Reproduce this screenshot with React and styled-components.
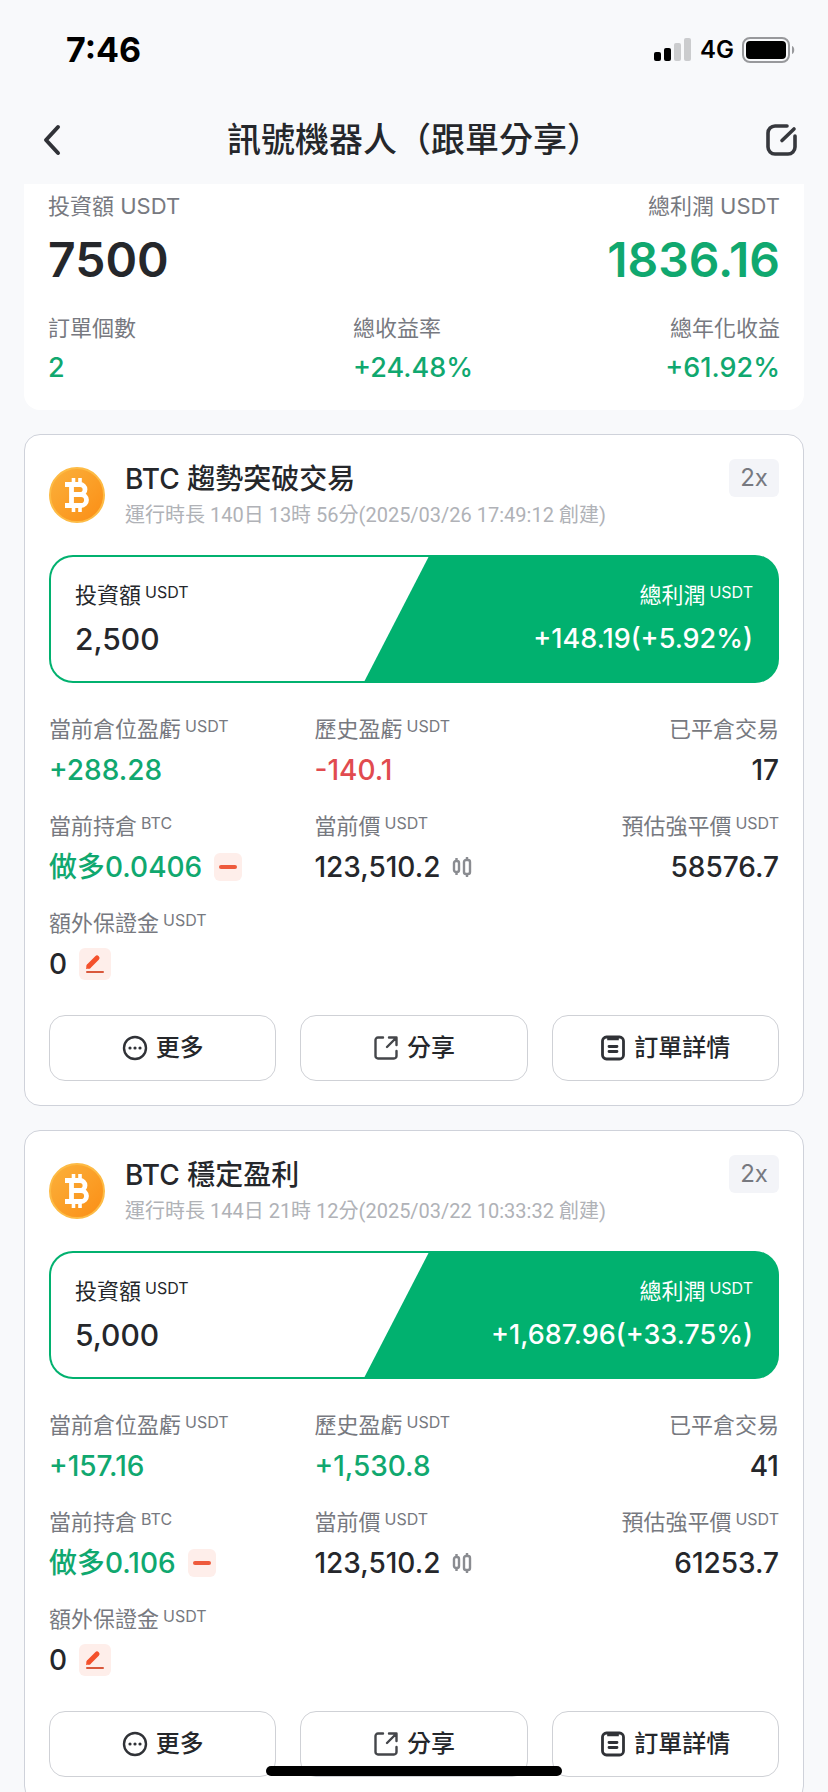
import React from "react";
import styled, { createGlobalStyle } from "styled-components";

const GREEN = "#01b16f";
const tones = { up: "#10a86f", down: "#e14b4f", dark: "#25272b" };

const GlobalStyle = createGlobalStyle`
  * { box-sizing: border-box; }
  html { scrollbar-width: none; }
  body {
    margin: 0;
    background: #f8f9fb;
    color: #25272b;
    font-family: Inter, "Noto Sans CJK TC", sans-serif;
    font-size: 22px;
  }
  button {
    margin: 0;
    padding: 0;
    border: 0;
    background: none;
    color: inherit;
    font: inherit;
    cursor: pointer;
  }
  h1, h2, p, dl, dd, dt { margin: 0; font-weight: 400; }
  svg { display: block; flex: none; }
`;

const StatusBar = styled.div`
  display: flex;
  align-items: center;
  justify-content: space-between;
  height: 100px;
  padding: 0 32px 0 66px;
  color: #000;
`;

const Clock = styled.time`
  font-size: 34px;
  line-height: 40px;
  font-weight: 700;
`;

const StatusIcons = styled.div`
  display: flex;
  align-items: center;
  gap: 8px;
  font-size: 24px;
  line-height: 28px;
  font-weight: 600;
`;

const NavBar = styled.header`
  display: grid;
  grid-template-columns: 28px 1fr 40px;
  align-items: center;
  height: 80px;
  padding: 0 26px 0 38px;
`;

const NavButton = styled.button`
  display: flex;
  align-items: center;
  justify-content: center;
  height: 40px;
`;

const PageTitle = styled.h1`
  text-align: center;
  font-size: 34px;
  line-height: 44px;
  font-weight: 500;
`;

const Content = styled.main`
  display: flex;
  flex-direction: column;
  gap: 24px;
  padding: 4px 24px 24px;
`;

const Summary = styled.section`
  padding: 8px 24px 24px;
  border-radius: 0 0 16px 16px;
  background: #fff;
`;

const SummaryTop = styled.dl`
  display: flex;
  justify-content: space-between;
  margin-bottom: 24px;
`;

const SummaryGrid = styled.dl`
  display: grid;
  grid-template-columns: 5fr 4fr 3fr;
`;

const Stat = styled.div`
  text-align: ${(p) => (p.$end ? "right" : "left")};
`;

const StatLabel = styled.dt`
  color: #777980;
  line-height: 28px;
  white-space: nowrap;
`;

const BigValue = styled.dd`
  margin-top: 10px;
  color: ${(p) => tones[p.$tone]};
  font-size: 48px;
  line-height: 60px;
  font-weight: 600;
`;

const MidValue = styled.dd`
  margin-top: 8px;
  color: ${(p) => tones[p.$tone]};
  font-size: 27px;
  line-height: 36px;
  font-weight: 500;
`;

const Card = styled.article`
  padding: 24px;
  border: 1px solid #cfd2da;
  border-radius: 16px;
  background: #fff;
`;

const CardHeader = styled.div`
  display: flex;
  align-items: center;
  gap: 20px;
  height: 72px;
`;

const Heading = styled.div`
  flex: 1;
`;

const BotName = styled.h2`
  font-size: 28px;
  line-height: 36px;
  font-weight: 500;
`;

const RunTime = styled.p`
  margin-top: 4px;
  color: #b0b2b7;
  font-family: Roboto, "Noto Sans CJK TC", sans-serif;
  font-size: 20px;
  line-height: 28px;
  white-space: nowrap;
`;

const Leverage = styled.span`
  align-self: flex-start;
  width: 50px;
  border-radius: 6px;
  background: #f3f4f8;
  color: #777980;
  font-size: 24px;
  line-height: 38px;
  text-align: center;
`;

const Banner = styled.dl`
  display: flex;
  height: 128px;
  margin-top: 24px;
  padding: 2px;
  border-radius: 24px;
  background: ${GREEN};
`;

const Invested = styled.div`
  width: 52%;
  padding: 24px;
  border-radius: 22px 0 0 22px;
  background: #fff;
  clip-path: polygon(0 0, 100% 0, calc(100% - 64px) 100%, 0 100%);
`;

const Profit = styled.div`
  flex: 1;
  padding: 24px;
  color: #fff;
  text-align: right;
`;

const BannerLabel = styled.dt`
  line-height: 28px;
`;

const BannerValue = styled.dd`
  margin-top: 12px;
  font-size: ${(p) => (p.$large ? 30 : 27)}px;
  line-height: 36px;
  font-weight: 500;
`;

const Unit = styled.span`
  display: inline-block;
  margin-left: 4px;
  font-size: 16px;
  line-height: 20px;
  vertical-align: 5px;
`;

const Metrics = styled.dl`
  display: grid;
  grid-template-columns: 4fr 4fr 3fr;
  row-gap: 24px;
  margin-top: 32px;
`;

const MetricValue = styled.dd`
  display: flex;
  align-items: center;
  justify-content: ${(p) => (p.$end ? "flex-end" : "flex-start")};
  gap: 12px;
  height: 36px;
  margin-top: 9px;
  color: ${(p) => tones[p.$tone]};
  font-size: 28px;
  line-height: 36px;
  font-weight: 500;
  white-space: nowrap;
`;

const TintButton = styled.button`
  display: flex;
  align-items: center;
  justify-content: center;
  width: ${(p) => p.$size}px;
  height: ${(p) => p.$size}px;
  border-radius: 6px;
  background: #feeeea;
`;

const Actions = styled.div`
  display: grid;
  grid-template-columns: repeat(3, 1fr);
  gap: 24px;
  margin-top: 33px;
`;

const ActionButton = styled.button`
  display: flex;
  align-items: center;
  justify-content: center;
  gap: 8px;
  height: 66px;
  border: 1px solid #cfd1d6;
  border-radius: 16px;
  font-size: 24px;
  line-height: 32px;
  font-weight: 500;
`;

const HomeIndicator = styled.div`
  position: fixed;
  bottom: 16px;
  left: 50%;
  width: 296px;
  height: 10px;
  margin-left: -148px;
  border-radius: 5px;
  background: #000;
`;

const SignalIcon = () => (
  <svg width="38" height="24" viewBox="0 0 38 24" aria-hidden="true">
    <rect x="0" y="14" width="7" height="9" rx="2" />
    <rect x="10" y="10" width="7" height="13" rx="2" />
    <rect x="20" y="5" width="7" height="18" rx="2" fill="#cbccce" />
    <rect x="30" y="0" width="7" height="23" rx="2" fill="#cbccce" />
  </svg>
);

const BatteryIcon = () => (
  <svg width="54" height="26" viewBox="0 0 54 26" aria-hidden="true">
    <rect x="1" y="1" width="46" height="24" rx="7" fill="none" stroke="#98999c" strokeWidth="2" />
    <rect x="4" y="4" width="40" height="18" rx="4" />
    <path d="M50 9c3 1 3 7 0 8z" fill="#98999c" />
  </svg>
);

const BackIcon = () => (
  <svg width="20" height="32" viewBox="0 0 20 32" fill="none" stroke="#303237" strokeWidth="4" strokeLinecap="round" strokeLinejoin="round">
    <path d="M16 3 4 16l12 13" />
  </svg>
);

const ComposeIcon = () => (
  <svg width="34" height="34" viewBox="0 0 34 34" fill="none" stroke="#36383d" strokeWidth="3.6" strokeLinecap="round" strokeLinejoin="round">
    <path d="M22 3H10a7 7 0 0 0-7 7v14a7 7 0 0 0 7 7h13a7 7 0 0 0 7-7V13" />
    <path d="M17 17.500 29 6" />
  </svg>
);

const BitcoinIcon = () => (
  <svg width="56" height="56" viewBox="0 0 56 56" fill="none" stroke="#fff" aria-hidden="true">
    <defs>
      <linearGradient id="coin" x1="0" y1="0" x2="1" y2="1">
        <stop offset="0" stopColor="#fbb13c" />
        <stop offset="0.600" stopColor="#fb9c24" />
        <stop offset="1" stopColor="#fb8d15" />
      </linearGradient>
    </defs>
    <circle cx="28" cy="28" r="27" fill="url(#coin)" stroke="#fdbb45" strokeWidth="2" />
    <path d="M24.500 11v6M31 11v6M24.500 39v6M31 39v6" strokeWidth="3.600" />
    <path d="M16 17.500h15a5 5 0 0 1 0 10h-7.500M16 38.500h16a5.500 5.500 0 0 0 0-11M22.500 17v21.500" strokeWidth="4.800" />
  </svg>
);

const CandlesIcon = () => (
  <svg width="20" height="22" viewBox="0 0 20 22" fill="none" stroke="#8a8c91" strokeWidth="2.400" aria-hidden="true">
    <rect x="2" y="5" width="5" height="11" rx="2" />
    <rect x="12" y="4" width="6" height="14" rx="2" />
    <path d="M4.500 2v3M4.500 16v3M15 1v3M15 18v3" />
  </svg>
);

const MinusIcon = () => (
  <svg width="20" height="4" viewBox="0 0 20 4">
    <rect x="1" width="18" height="4" rx="2" fill="#ee5a3c" />
  </svg>
);

const PencilIcon = () => (
  <svg width="20" height="20" viewBox="0 0 20 20" fill="none" stroke="#f4512c" strokeLinecap="round">
    <path d="m4 12 8-8" strokeWidth="5" />
    <path d="m1 15 1-5 4 4z" fill="#f4512c" stroke="none" />
    <path d="M2 18h16" stroke="#d9583c" strokeWidth="2" />
  </svg>
);

const MoreIcon = () => (
  <svg width="26" height="26" viewBox="0 0 26 26" fill="none" stroke="#303237" strokeWidth="2.400">
    <circle cx="13" cy="13" r="11" />
    <path d="M8 13h.01M13 13h.01M18 13h.01" strokeWidth="3.200" strokeLinecap="round" />
  </svg>
);

const ShareIcon = () => (
  <svg width="26" height="26" viewBox="0 0 26 26" fill="none" stroke="#44464a" strokeWidth="2.400" strokeLinecap="round" strokeLinejoin="round">
    <path d="M10 2.500H5A2.500 2.500 0 0 0 2.500 5v16A2.500 2.500 0 0 0 5 23.500h16a2.500 2.500 0 0 0 2.500-2.500v-5" />
    <path d="M14 12 23 3M16 2.500h7.500V10" />
  </svg>
);

const OrderIcon = () => (
  <svg width="26" height="26" viewBox="0 0 26 26" fill="none" stroke="#303237" strokeWidth="2.800" strokeLinecap="round">
    <rect x="2.500" y="2" width="21" height="22" rx="4" />
    <path d="M8 2.500h10v2H8z" fill="#303237" stroke="#303237" strokeWidth="1.600" />
    <path d="M9 11.500h8M9 16.500h8" />
  </svg>
);

const bots = [
  {
    name: "BTC 趨勢突破交易",
    run: "運行時長 140日 13時 56分(2025/03/26 17:49:12 創建)",
    invested: "2,500",
    profit: "+148.19(+5.92%)",
    metrics: [
      { label: "當前倉位盈虧", unit: "USDT", value: "+288.28", tone: "up" },
      { label: "歷史盈虧", unit: "USDT", value: "-140.1", tone: "down" },
      { label: "已平倉交易", value: "17", end: true },
      { label: "當前持倉", unit: "BTC", value: "做多0.0406", tone: "up", extra: "reduce" },
      { label: "當前價", unit: "USDT", value: "123,510.2", extra: "chart" },
      { label: "預估強平價", unit: "USDT", value: "58576.7", end: true },
      { label: "額外保證金", unit: "USDT", value: "0", extra: "edit" },
    ],
  },
  {
    name: "BTC 穩定盈利",
    run: "運行時長 144日 21時 12分(2025/03/22 10:33:32 創建)",
    invested: "5,000",
    profit: "+1,687.96(+33.75%)",
    metrics: [
      { label: "當前倉位盈虧", unit: "USDT", value: "+157.16", tone: "up" },
      { label: "歷史盈虧", unit: "USDT", value: "+1,530.8", tone: "up" },
      { label: "已平倉交易", value: "41", end: true },
      { label: "當前持倉", unit: "BTC", value: "做多0.106", tone: "up", extra: "reduce" },
      { label: "當前價", unit: "USDT", value: "123,510.2", extra: "chart" },
      { label: "預估強平價", unit: "USDT", value: "61253.7", end: true },
      { label: "額外保證金", unit: "USDT", value: "0", extra: "edit" },
    ],
  },
];

const extras = {
  reduce: <TintButton $size={28} aria-label="減倉"><MinusIcon /></TintButton>,
  chart: <CandlesIcon />,
  edit: <TintButton $size={32} aria-label="編輯保證金"><PencilIcon /></TintButton>,
};

function Metric({ label, unit, value, tone = "dark", end, extra }) {
  return (
    <Stat $end={end}>
      <StatLabel>
        {label}
        {unit && <Unit>{unit}</Unit>}
      </StatLabel>
      <MetricValue $tone={tone} $end={end}>
        {value}
        {extra && extras[extra]}
      </MetricValue>
    </Stat>
  );
}

function BotCard({ bot }) {
  return (
    <Card>
      <CardHeader>
        <BitcoinIcon />
        <Heading>
          <BotName>{bot.name}</BotName>
          <RunTime>{bot.run}</RunTime>
        </Heading>
        <Leverage>2x</Leverage>
      </CardHeader>
      <Banner>
        <Invested>
          <BannerLabel>投資額<Unit>USDT</Unit></BannerLabel>
          <BannerValue $large>{bot.invested}</BannerValue>
        </Invested>
        <Profit>
          <BannerLabel>總利潤<Unit>USDT</Unit></BannerLabel>
          <BannerValue>{bot.profit}</BannerValue>
        </Profit>
      </Banner>
      <Metrics>
        {bot.metrics.map((m) => (
          <Metric key={m.label} {...m} />
        ))}
      </Metrics>
      <Actions>
        <ActionButton><MoreIcon />更多</ActionButton>
        <ActionButton><ShareIcon />分享</ActionButton>
        <ActionButton><OrderIcon />訂單詳情</ActionButton>
      </Actions>
    </Card>
  );
}

export default function App() {
  return (
    <>
      <GlobalStyle />
      <StatusBar>
        <Clock>7:46</Clock>
        <StatusIcons>
          <SignalIcon />
          <span>4G</span>
          <BatteryIcon />
        </StatusIcons>
      </StatusBar>
      <NavBar>
        <NavButton aria-label="返回"><BackIcon /></NavButton>
        <PageTitle>訊號機器人（跟單分享）</PageTitle>
        <NavButton aria-label="分享"><ComposeIcon /></NavButton>
      </NavBar>
      <Content>
        <Summary>
          <SummaryTop>
            <Stat>
              <StatLabel>投資額 USDT</StatLabel>
              <BigValue $tone="dark">7500</BigValue>
            </Stat>
            <Stat $end>
              <StatLabel>總利潤 USDT</StatLabel>
              <BigValue $tone="up">1836.16</BigValue>
            </Stat>
          </SummaryTop>
          <SummaryGrid>
            <Stat>
              <StatLabel>訂單個數</StatLabel>
              <MidValue $tone="up">2</MidValue>
            </Stat>
            <Stat>
              <StatLabel>總收益率</StatLabel>
              <MidValue $tone="up">+24.48%</MidValue>
            </Stat>
            <Stat $end>
              <StatLabel>總年化收益</StatLabel>
              <MidValue $tone="up">+61.92%</MidValue>
            </Stat>
          </SummaryGrid>
        </Summary>
        {bots.map((bot) => (
          <BotCard key={bot.name} bot={bot} />
        ))}
      </Content>
      <HomeIndicator />
    </>
  );
}
